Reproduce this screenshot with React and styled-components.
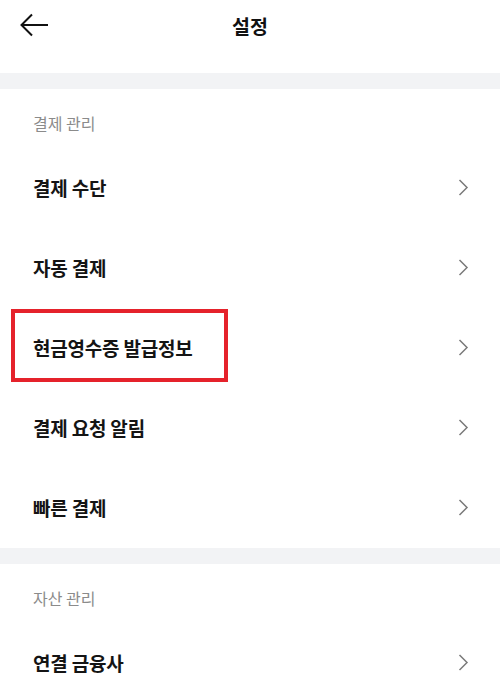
import React from "react";
import styled, { createGlobalStyle } from "styled-components";

const GlobalStyle = createGlobalStyle`
  html, body {
    margin: 0;
    padding: 0;
    background: #ffffff;
  }
  body {
    font-family: "Noto Sans CJK KR", "Noto Sans", sans-serif;
  }
`;

const Page = styled.div`
  width: 500px;
  min-height: 683px;
  background: #fff;
  overflow: hidden;
`;

const Header = styled.header`
  position: relative;
  height: 50px;
  display: flex;
  align-items: center;
  justify-content: center;
  margin-bottom: 23px;
`;

const BackButton = styled.button`
  position: absolute;
  left: 20px;
  top: 13px;
  width: 30px;
  height: 24px;
  padding: 0;
  border: none;
  background: none;
  display: flex;
  align-items: center;
`;

const Title = styled.h1`
  margin: 0;
  font-size: 19.5px;
  font-weight: 700;
  color: #111;
`;

const Band = styled.div`
  height: 16px;
  background: #f2f3f5;
`;

const SectionLabel = styled.div`
  height: 59px;
  box-sizing: border-box;
  padding: 23px 0 0 33px;
  font-size: 16px;
  line-height: 23px;
  color: #8b8b8b;
`;

const Row = styled.div`
  position: relative;
  height: 80px;
  display: flex;
  align-items: center;
  justify-content: space-between;
  padding: 0 31px 2px 33px;
  box-sizing: border-box;
`;

const RowText = styled.span`
  font-size: 19px;
  font-weight: 700;
  color: #141414;
  letter-spacing: -0.2px;
`;

const Highlight = styled.div`
  position: absolute;
  left: 11px;
  top: 1px;
  width: 217px;
  height: 73px;
  box-sizing: border-box;
  border: 4px solid #e5222b;
  pointer-events: none;
`;

const Chevron = () => (
  <svg width="11" height="17" viewBox="0 0 11 17" fill="none">
    <path d="M1.5 1 L9 8.5 L1.5 16" stroke="#7a7a7a" strokeWidth="1.5" />
  </svg>
);

const BackArrow = () => (
  <svg width="29" height="24" viewBox="0 0 29 24" fill="none">
    <path d="M28 12 H2 M12 1.5 L1.5 12 L12 22.5" stroke="#111" strokeWidth="2" />
  </svg>
);

const sections = [
  {
    label: "결제 관리",
    items: ["결제 수단", "자동 결제", "현금영수증 발급정보", "결제 요청 알림", "빠른 결제"],
  },
  {
    label: "자산 관리",
    items: ["연결 금융사"],
  },
];

export default function App() {
  return (
    <Page>
      <GlobalStyle />
      <Header>
        <BackButton aria-label="뒤로">
          <BackArrow />
        </BackButton>
        <Title>설정</Title>
      </Header>
      {sections.map((section) => (
        <section key={section.label}>
          <Band />
          <SectionLabel>{section.label}</SectionLabel>
          {section.items.map((item) => (
            <Row key={item}>
              <RowText>{item}</RowText>
              <Chevron />
              {item === "현금영수증 발급정보" && <Highlight />}
            </Row>
          ))}
        </section>
      ))}
    </Page>
  );
}
